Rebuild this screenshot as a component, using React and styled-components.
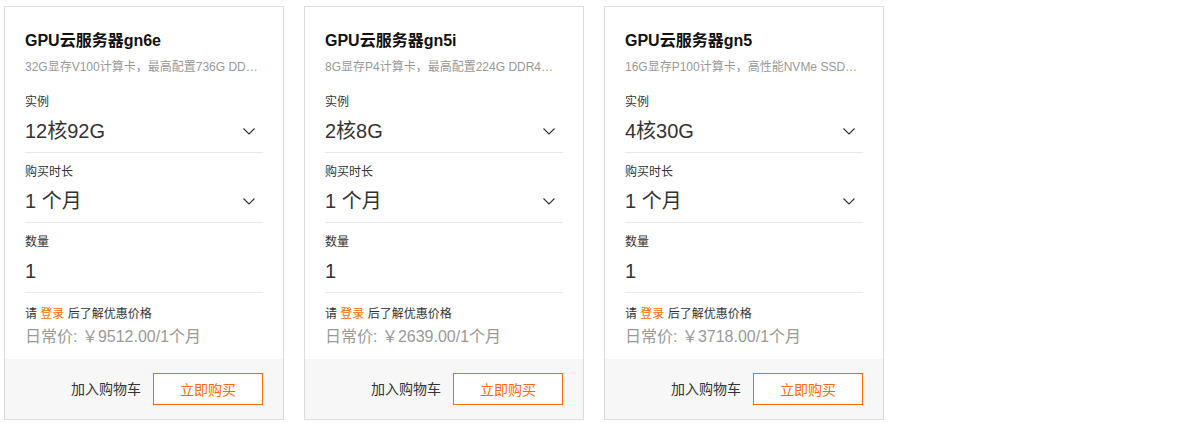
import React from "react";
import styled, { createGlobalStyle } from "styled-components";

const Global = createGlobalStyle`
  html, body { margin: 0; padding: 0; background: #fff; }
  body { font-family: "Liberation Sans", "Noto Sans CJK SC", sans-serif; color: #333; }
`;

const Page = styled.div`
  display: flex;
  gap: 20px;
  padding: 6px 4px;
`;

const Card = styled.div`
  width: 280px;
  box-sizing: border-box;
  border: 1px solid #dcdcdc;
  background: #fff;
  display: flex;
  flex-direction: column;
`;

const Body = styled.div`
  padding: 22px 20px 10px;
`;

const Title = styled.div`
  font-size: 16px;
  line-height: 24px;
  font-weight: bold;
  color: #111;
`;

const Sub = styled.div`
  margin-top: 4px;
  font-size: 12px;
  line-height: 20px;
  color: #999;
  white-space: nowrap;
  overflow: hidden;
  text-overflow: ellipsis;
`;

const Groups = styled.div`
  margin-top: 6px;
`;

const Group = styled.div`
  padding: 10px 0 6px;
  border-bottom: 1px solid #e8e8e8;
`;

const Label = styled.div`
  font-size: 12px;
  line-height: 18px;
  color: #333;
`;

const ValueRow = styled.div`
  margin-top: 5px;
  display: flex;
  align-items: center;
  justify-content: space-between;
  font-size: 20px;
  line-height: 30px;
  color: #333;
`;

const Chevron = styled.svg`
  width: 12px;
  height: 7px;
  margin-right: 8px;
  display: block;
`;

const Login = styled.div`
  margin-top: 12px;
  font-size: 12px;
  line-height: 18px;
  color: #333;
`;

const LoginLink = styled.span`
  color: #ff6a00;
`;

const Price = styled.div`
  margin-top: 2px;
  font-size: 16px;
  line-height: 24px;
  color: #999;
`;

const Footer = styled.div`
  margin-top: auto;
  height: 60px;
  box-sizing: border-box;
  background: #f7f7f7;
  display: flex;
  align-items: flex-start;
  justify-content: flex-end;
  gap: 12px;
  padding: 14px 20px 0;
`;

const CartLink = styled.span`
  font-size: 14px;
  line-height: 32px;
  color: #333;
`;

const BuyButton = styled.button`
  width: 110px;
  height: 32px;
  box-sizing: border-box;
  border: 1px solid #ff6a00;
  background: #fff;
  color: #ff6a00;
  font-family: inherit;
  font-size: 14px;
  padding: 0;
  cursor: pointer;
`;

const Down = () => (
  <Chevron viewBox="0 0 12 7">
    <polyline points="0.5,0.5 6,6 11.5,0.5" fill="none" stroke="#333" strokeWidth="1.1" />
  </Chevron>
);

const products = [
  {
    title: "GPU云服务器gn6e",
    sub: "32G显存V100计算卡，最高配置736G DDR4内存",
    spec: "12核92G",
    price: "日常价: ￥9512.00/1个月",
  },
  {
    title: "GPU云服务器gn5i",
    sub: "8G显存P4计算卡，最高配置224G DDR4内存",
    spec: "2核8G",
    price: "日常价: ￥2639.00/1个月",
  },
  {
    title: "GPU云服务器gn5",
    sub: "16G显存P100计算卡，高性能NVMe SSD本地盘",
    spec: "4核30G",
    price: "日常价: ￥3718.00/1个月",
  },
];

const ProductCard = ({ p }) => (
  <Card>
    <Body>
      <Title>{p.title}</Title>
      <Sub>{p.sub}</Sub>
      <Groups>
        <Group>
          <Label>实例</Label>
          <ValueRow>
            <span>{p.spec}</span>
            <Down />
          </ValueRow>
        </Group>
        <Group>
          <Label>购买时长</Label>
          <ValueRow>
            <span>1 个月</span>
            <Down />
          </ValueRow>
        </Group>
        <Group>
          <Label>数量</Label>
          <ValueRow>
            <span>1</span>
          </ValueRow>
        </Group>
      </Groups>
      <Login>
        请 <LoginLink>登录</LoginLink> 后了解优惠价格
      </Login>
      <Price>{p.price}</Price>
    </Body>
    <Footer>
      <CartLink>加入购物车</CartLink>
      <BuyButton>立即购买</BuyButton>
    </Footer>
  </Card>
);

export default function App() {
  return (
    <>
      <Global />
      <Page>
        {products.map((p) => (
          <ProductCard key={p.title} p={p} />
        ))}
      </Page>
    </>
  );
}
